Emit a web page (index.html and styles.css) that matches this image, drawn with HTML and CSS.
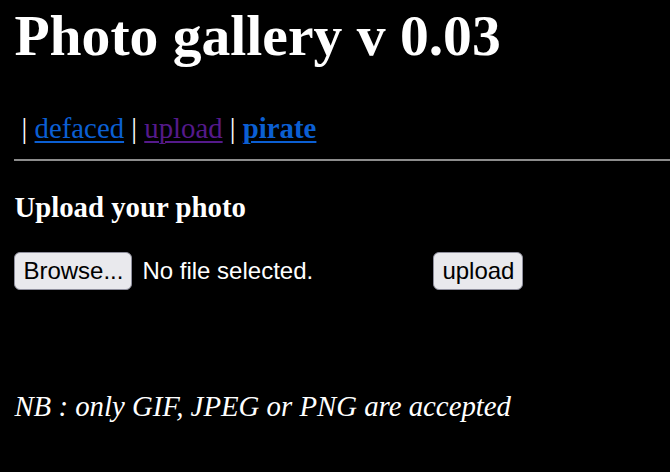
FILE: index.html
```html
<!DOCTYPE html>
<html lang="en">
<head>
<meta charset="utf-8">
<title>Photo gallery v 0.03</title>
<link rel="stylesheet" href="styles.css">
</head>
<body>
<h1 class="title">Photo gallery v 0.03</h1>
<p class="nav">&nbsp;| <a class="link" href="#defaced">defaced</a> | <a class="link visited" href="#upload">upload</a> | <a class="link strong" href="#pirate">pirate</a></p>
<hr class="rule">
<h4 class="section">Upload your photo</h4>
<form class="upload-form" action="#">
  <div class="file-row">
    <span class="file-input">
      <button type="button" class="btn">Browse...</button>
      <span class="file-name">No file selected.</span>
    </span>
    <button type="submit" class="btn">upload</button>
  </div>
</form>
<p class="note">NB : only GIF, JPEG or PNG are accepted</p>
</body>
</html>
```
FILE: styles.css
```css
html {
  background: #000;
}
body {
  margin: 0 0 0 14.4px;
  background: #000;
  color: #fff;
  font-family: "Liberation Serif", "Times New Roman", serif;
  font-size: 28.8px;
  line-height: 34px;
  overflow: hidden;
}
.title {
  margin: 3px 0 0;
  font-size: 57.6px;
  line-height: 66px;
  font-weight: bold;
}
.nav {
  margin: 42px 0 0;
  white-space: nowrap;
}
.link {
  color: #0b5fd3;
  text-decoration: underline;
  text-decoration-thickness: 2px;
  text-underline-offset: 3px;
}
.link.visited {
  color: #551a8b;
}
.link.strong {
  font-weight: bold;
}
.rule {
  margin: 14px -20px 0 0;
  border: 0;
  height: 2px;
  background: #8c8c8c;
}
.section {
  margin: 29px 0 0;
  font-size: 28.8px;
  font-weight: bold;
}
.upload-form {
  margin: 0;
}
.file-row {
  display: flex;
  align-items: center;
  margin-top: 28px;
  height: 38px;
}
.file-input {
  display: flex;
  align-items: center;
  width: 419px;
}
.btn {
  box-sizing: border-box;
  height: 38px;
  padding: 0 8px;
  background: #e9e9ed;
  color: #000;
  border: 1.8px solid #8f8f9d;
  border-radius: 6px;
  font-family: "Liberation Sans", Arial, sans-serif;
  font-size: 24px;
  line-height: 34px;
}
.file-name {
  margin-left: 10px;
  font-family: "Liberation Sans", Arial, sans-serif;
  font-size: 24px;
  color: #fff;
}
.note {
  margin: 99px 0 0;
  font-style: italic;
}
```
